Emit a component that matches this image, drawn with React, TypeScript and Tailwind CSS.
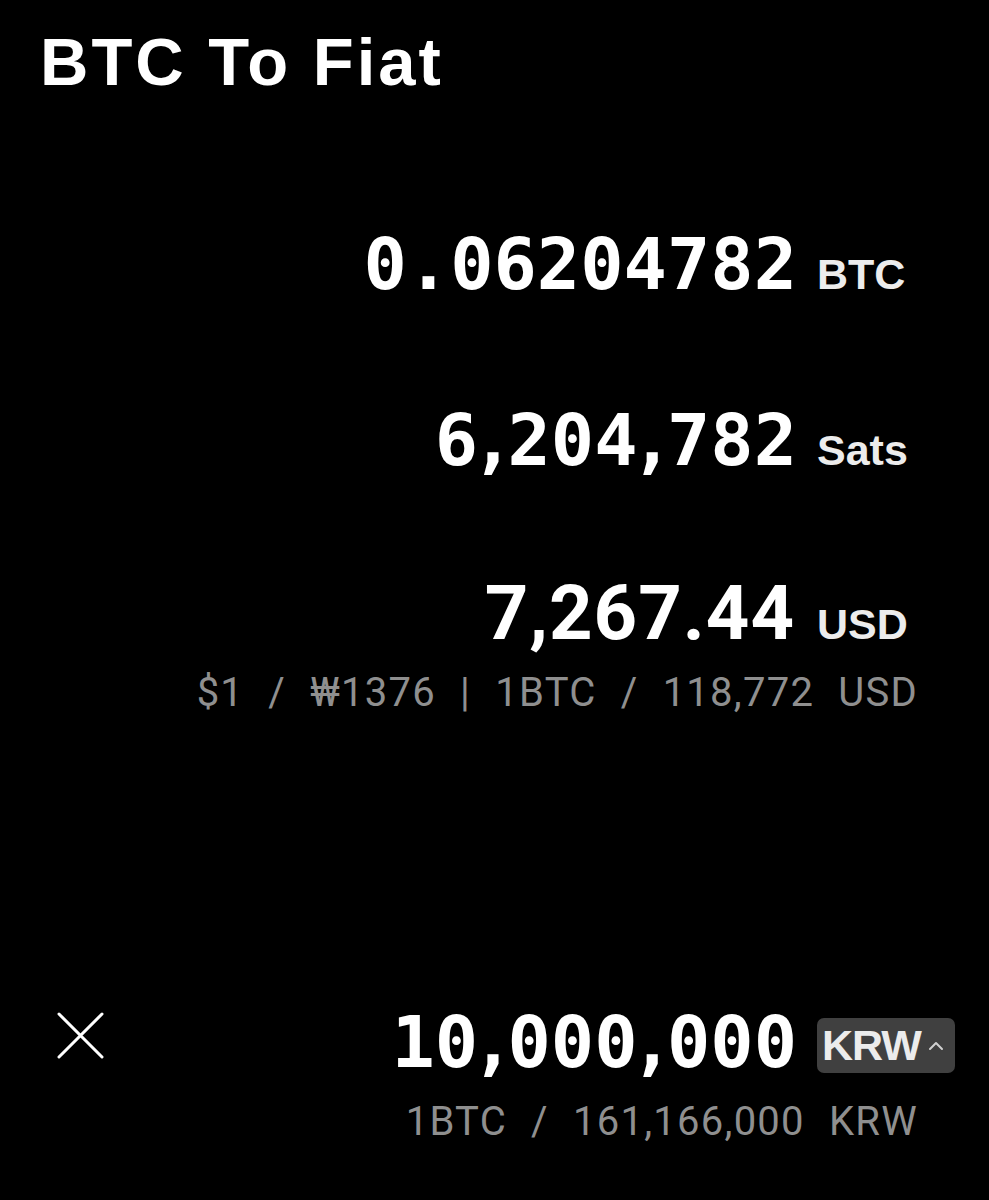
import { ChevronUp } from 'lucide-react'

const mono = { fontFamily: '"DejaVu Sans Mono", "Liberation Mono", monospace' }
const roboto = { fontFamily: 'Roboto, "Liberation Sans", sans-serif' }

// commas in the reference are narrower than the digits
function Digits({ value }: { value: string }) {
  return (
    <>
      {value.split('').map((c, i) =>
        c === ',' ? (
          <span key={i} className="mx-[-7px]">
            ,
          </span>
        ) : (
          <span key={i}>{c}</span>
        ),
      )}
    </>
  )
}

function Row({ value, unit, className }: { value: string; unit: string; className?: string }) {
  return (
    <div className={`flex items-baseline justify-end ${className ?? ''}`}>
      <span className="text-[72px] font-bold leading-none text-white" style={mono}>
        <Digits value={value} />
      </span>
      <span className="ml-[20px] w-[172px] text-[43px] font-bold leading-none text-[#ececec]">{unit}</span>
    </div>
  )
}

export default function App() {
  return (
    <div
      className="flex h-[1200px] w-full flex-col overflow-hidden bg-black"
      style={{ fontFamily: '"Liberation Sans", Arial, sans-serif' }}
    >
      <h1 className="pl-[40px] pt-[28px] text-[67px] font-bold leading-none tracking-[3px] text-white">
        BTC To Fiat
      </h1>

      <Row value="0.06204782" unit="BTC" className="mt-[133px]" />
      <Row value="6,204,782" unit="Sats" className="mt-[104px]" />

      <div className="mt-[99px] flex items-baseline justify-end">
        <span className="text-[76px] font-bold leading-none tracking-[1px] text-white" style={roboto}>
          7,267.44
        </span>
        <span className="ml-[22px] w-[172px] text-[43px] font-bold leading-none text-[#ececec]">USD</span>
      </div>

      <div
        className="mt-[22px] pr-[71px] text-right text-[40px] leading-none tracking-[1.25px] text-[#8f8f8f] [word-spacing:13px]"
        style={roboto}
      >
        $1 / ₩1376 | 1BTC / 118,772 USD
      </div>

      <div className="mt-[293px] flex">
        <svg className="ml-[57px] mt-[6px] h-[47px] w-[47px]" viewBox="0 0 47 47" fill="none">
          <path d="M2 2 L45 45 M45 2 L2 45" stroke="white" strokeWidth="3" strokeLinecap="round" />
        </svg>
        <div className="flex flex-1 justify-end">
          <span className="text-[72px] font-bold leading-none text-white" style={mono}>
            <Digits value="10,000,000" />
          </span>
          <div className="ml-[20px] mr-[34px] mt-[12px] flex h-[55px] w-[138px] items-center rounded-[7px] bg-[#404040] pl-[5px]">
            <span className="text-[43px] font-bold leading-none tracking-[-1px] text-[#ececec]">KRW</span>
            <ChevronUp className="ml-[3px] h-[24px] w-[24px] text-[#d0d0d0]" strokeWidth={2} />
          </div>
        </div>
      </div>

      <div
        className="mt-[24px] pr-[71px] text-right text-[40px] leading-none tracking-[1.25px] text-[#8f8f8f] [word-spacing:13px]"
        style={roboto}
      >
        1BTC / 161,166,000 KRW
      </div>
    </div>
  )
}
